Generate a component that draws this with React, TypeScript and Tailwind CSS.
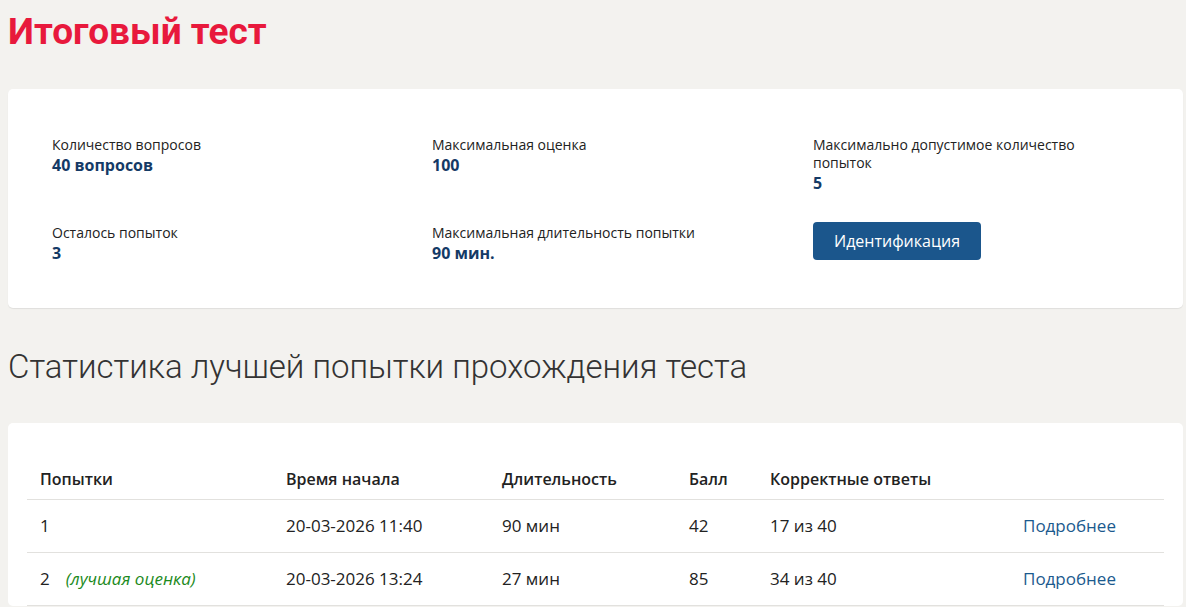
const rows = [
  { n: "1", best: false, start: "20-03-2026 11:40", dur: "90 мин", score: "42", correct: "17 из 40" },
  { n: "2", best: true, start: "20-03-2026 13:24", dur: "27 мин", score: "85", correct: "34 из 40" },
];

function Info({ label, value }: { label: string; value: string }) {
  return (
    <div>
      <div className="text-[14px] leading-[18px] text-[#222]">{label}</div>
      <div className="text-[16px] leading-[22px] font-bold text-[#143a66]">{value}</div>
    </div>
  );
}

export default function App() {
  return (
    <div className="min-h-screen bg-[#f3f2ef] pl-2 pr-[3px] pt-[10px] font-['Open_Sans',sans-serif] text-[#222]">
      <h1 className="font-['Roboto',sans-serif] text-[37px] leading-[44px] font-bold text-[#e8193c]">Итоговый тест</h1>

      <div className="mt-[35px] rounded-[5px] bg-white pl-[44px] pt-[47px] pb-[44px] shadow-[0_1px_1px_rgba(0,0,0,0.08)]">
        <div className="grid grid-cols-[380px_381px_280px] gap-y-[28px]">
          <Info label="Количество вопросов" value="40 вопросов" />
          <Info label="Максимальная оценка" value="100" />
          <Info label="Максимально допустимое количество попыток" value="5" />
          <div className="pt-[2px]"><Info label="Осталось попыток" value="3" /></div>
          <div className="pt-[2px]"><Info label="Максимальная длительность попытки" value="90 мин." /></div>
          <div>
            <button className="h-[38px] w-[168px] rounded-[4px] bg-[#1b568c] text-[16px] text-white">Идентификация</button>
          </div>
        </div>
      </div>

      <h2 className="mt-[39px] font-['Roboto',sans-serif] text-[33px] leading-[40px] font-light text-[#333]">
        Статистика лучшей попытки прохождения теста
      </h2>

      <div className="mt-[36px] rounded-[5px] bg-white px-[19px] pt-[44px]">
        <table className="w-full text-left">
          <thead>
            <tr className="border-b border-[#e2e1de] text-[16px]">
              <th className="w-[259px] pb-[8px] pl-[13px] font-semibold">Попытки</th>
              <th className="w-[216px] pb-[8px] font-semibold">Время начала</th>
              <th className="w-[187px] pb-[8px] font-semibold">Длительность</th>
              <th className="w-[81px] pb-[8px] font-semibold">Балл</th>
              <th className="w-[253px] pb-[8px] font-semibold">Корректные ответы</th>
              <th className="pb-[8px]"></th>
            </tr>
          </thead>
          <tbody className="text-[17px]">
            {rows.map((r) => (
              <tr key={r.n} className="border-b border-[#e2e1de]">
                <td className="h-[53px] pl-[13px]">
                  {r.n}
                  {r.best && <span className="ml-[16px] text-[17px] italic text-[#1c8a1c]">(лучшая оценка)</span>}
                </td>
                <td>{r.start}</td>
                <td>{r.dur}</td>
                <td>{r.score}</td>
                <td>{r.correct}</td>
                <td className="text-[#1b5a8e]">Подробнее</td>
              </tr>
            ))}
          </tbody>
        </table>
      </div>
    </div>
  );
}
